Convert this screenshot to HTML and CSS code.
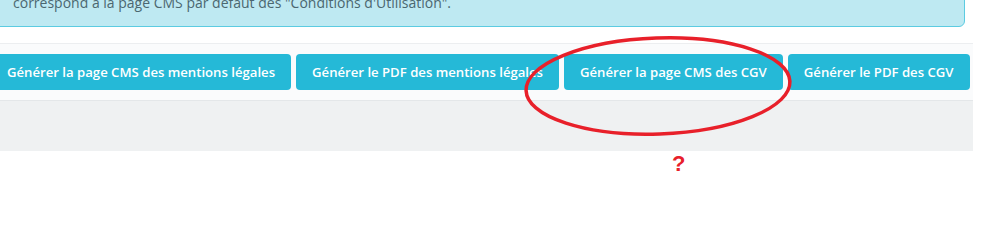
FILE: index.html
```html
<!DOCTYPE html>
<html lang="fr">
<head>
<meta charset="utf-8">
<link rel="stylesheet" href="styles.css">
</head>
<body>
<div class="page">
  <div class="alert">correspond à la page CMS par défaut des "Conditions d'Utilisation".</div>
  <div class="panel">
    <div class="panel-body">
      <button class="btn">Générer la page CMS des mentions légales</button>
      <button class="btn">Générer le PDF des mentions légales</button>
      <button class="btn">Générer la page CMS des CGV</button>
      <button class="btn">Générer le PDF des CGV</button>
    </div>
    <div class="panel-footer"></div>
  </div>
  <div class="note">?</div>
</div>
<svg class="circle" width="300" height="110" viewBox="0 0 300 110">
  <ellipse cx="150" cy="55" rx="132" ry="48" fill="none" stroke="#e8202a" stroke-width="3.5" transform="rotate(-2 150 55)"/>
</svg>
</body>
</html>
```

FILE: styles.css
```css
html, body {
  margin: 0;
  padding: 0;
  background: #fff;
}
body {
  font-family: "Open Sans", "Liberation Sans", sans-serif;
  width: 1000px;
  height: 250px;
  overflow: hidden;
  position: relative;
}
.page {
  width: 986px;
  margin-left: -13px;
}
.alert {
  margin-top: -16px;
  margin-right: 8px;
  background: #bee9f2;
  border: 1px solid #5ccbe1;
  border-radius: 0 0 6px 6px;
  padding: 9px 0 0 25px;
  height: 43px;
  box-sizing: border-box;
  font-size: 14px;
  line-height: 18px;
  color: #4b6770;
}
.panel {
  margin-top: 16px;
  border-top: 1px solid #eceef0;
}
.panel-body {
  background: #fafbfc;
  padding: 10px 4px 10px 4px;
  display: flex;
  gap: 5px;
  border-bottom: 1px solid #e4e7e9;
}
.btn {
  background: #25b9d7;
  color: #fff;
  border: none;
  border-radius: 4px;
  height: 36px;
  padding: 0 16px;
  font-family: "Open Sans", "Liberation Sans", sans-serif;
  font-weight: 600;
  font-size: 13.15px;
  white-space: nowrap;
}
.panel-footer {
  background: #eff1f2;
  height: 50px;
}
.note {
  margin: 2px 0 0 685px;
  color: #e8202a;
  font-family: "Liberation Sans", Arial, sans-serif;
  font-weight: 700;
  font-size: 22px;
  line-height: 22px;
}
.circle {
  position: absolute;
  left: 508px;
  top: 31px;
}
```
